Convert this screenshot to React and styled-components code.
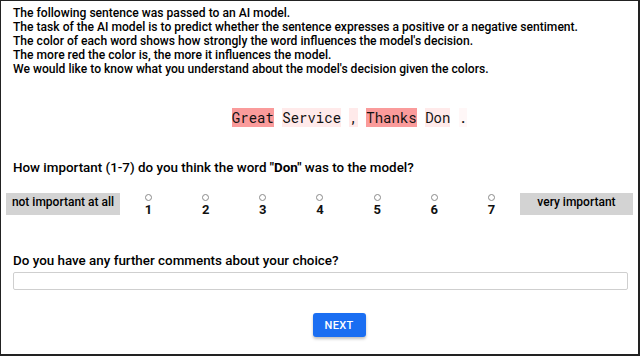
import React from 'react'
import styled, { createGlobalStyle } from 'styled-components'

const Global = createGlobalStyle`
  html, body { margin: 0; padding: 0; background: #fff; }
  * { box-sizing: border-box; }
`

const tokens = [
  { text: 'Great', level: 2 },
  { text: 'Service', level: 1 },
  { text: ',', level: 1 },
  { text: 'Thanks', level: 2 },
  { text: 'Don', level: 1 },
  { text: '.', level: 0 },
]

const shades = ['#fff7f7', '#ffeaea', '#fa9b9b']

function App() {
  return (
    <>
      <Global />
      <Frame>
        <Intro>
          The following sentence was passed to an AI model.<br />
          The task of the AI model is to predict whether the sentence expresses a positive or a negative sentiment.<br />
          The color of each word shows how strongly the word influences the model's decision.<br />
          The more red the color is, the more it influences the model.<br />
          We would like to know what you understand about the model's decision given the colors.
        </Intro>

        <Sentence>
          {tokens.map((t, i) => (
            <React.Fragment key={i}>
              <Token shade={shades[t.level]}>{t.text}</Token>
              {i < tokens.length - 1 ? ' ' : ''}
            </React.Fragment>
          ))}
        </Sentence>

        <Question>
          How important (1-7) do you think the word <b>"Don"</b> was to the model?
        </Question>

        <Scale>
          <EndLabel>not important at all</EndLabel>
          {[1, 2, 3, 4, 5, 6, 7].map(n => (
            <Option key={n}>
              <Radio />
              <Num>{n}</Num>
            </Option>
          ))}
          <EndLabel>very important</EndLabel>
        </Scale>

        <Question second>Do you have any further comments about your choice?</Question>
        <Comment type="text" />

        <Actions>
          <NextButton type="button">NEXT</NextButton>
        </Actions>
      </Frame>
    </>
  )
}

export default App

const Frame = styled.div`
  width: 640px;
  height: 356px;
  border: 1px solid #222;
  border-right-width: 2px;
  border-bottom-width: 2px;
  background: #fff;
  font-family: Roboto, 'Liberation Sans', sans-serif;
  color: #111;
  overflow: hidden;
`

const Intro = styled.div`
  padding: 5px 12px 0;
  font-size: 12.1px;
  line-height: 14px;
  font-weight: 500;
  color: #000;
`

const Sentence = styled.div`
  margin-top: 32px;
  padding-left: 60px;
  text-align: center;
  font-family: 'Roboto Mono', 'DejaVu Sans Mono', 'Liberation Mono', monospace;
  font-size: 14px;
  line-height: 19px;
  white-space: pre;
`

const Token = styled.span`
  display: inline-block;
  background: ${p => p.shade};
  color: #111;
`

const Question = styled.div`
  margin-top: ${p => (p.second ? '36px' : '32px')};
  padding: 0 12px;
  font-size: 13.4px;
  line-height: 17px;
  font-weight: 500;
  color: #000;

  b { font-weight: 700; }
`

const Scale = styled.div`
  display: grid;
  grid-template-columns: 114px repeat(7, 57.15px) 113px;
  margin: 17px 0 0 5px;
  align-items: start;
`

const EndLabel = styled.div`
  height: 22px;
  padding-top: 2px;
  background: #d3d3d3;
  font-size: 12px;
  line-height: 14px;
  font-weight: 500;
  color: #000;
  text-align: center;
`

const Option = styled.div`
  display: flex;
  flex-direction: column;
  align-items: center;
  padding-top: 1px;
`

const Radio = styled.span`
  width: 7px;
  height: 7px;
  border: 1px solid #8a8a8a;
  border-radius: 50%;
  background: #fff;
`

const Num = styled.span`
  font-size: 13px;
  line-height: 13px;
  font-weight: 700;
  margin-top: 2px;
`

const Comment = styled.input`
  display: block;
  width: 615px;
  height: 18px;
  margin: 3px 0 0 12px;
  border: 1px solid #cfcfcf;
  border-radius: 2px;
  outline: none;
  background: #fff;
`

const Actions = styled.div`
  display: flex;
  justify-content: center;
  margin-top: 23px;
  padding-left: 39px;
`

const NextButton = styled.button`
  width: 53px;
  height: 24px;
  border: none;
  border-radius: 3px;
  background: #1a6ef2;
  color: #fff;
  font-family: Roboto, 'Liberation Sans', sans-serif;
  font-size: 11px;
  font-weight: 500;
  letter-spacing: 0.3px;
  box-shadow: 0 2px 3px rgba(0, 0, 0, 0.25);
  padding: 0;
`
